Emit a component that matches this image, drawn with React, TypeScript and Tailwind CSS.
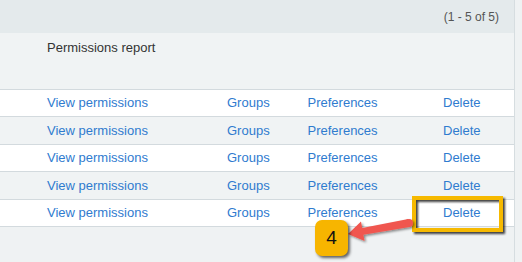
export default function App() {
  const rows = [0, 1, 2, 3, 4];

  return (
    <div className="relative w-[522px] h-[262px] overflow-hidden bg-[#eff2f3] font-['Liberation_Sans',Arial,sans-serif]">
      <div className="w-[515px] h-full border-r border-[#d6dde0]">
        {/* Pager */}
        <div className="h-[33px] bg-[#e4eaec] flex items-center justify-end pr-[15px] text-[12px] text-[#555]">
          (1 - 5 of 5)
        </div>

        {/* Report title */}
        <div className="h-[56px] bg-[#f0f3f4] pl-[47px] pt-[7px] text-[13px] leading-[16px] text-[#333]">
          Permissions report
        </div>

        {/* Rows */}
        <div className="border-b border-[#d3dade]">
          {rows.map((i) => (
            <div
              key={i}
              className={`h-[27.4px] border-t border-[#d3dade] flex items-center pl-[47px] text-[13px] text-[#2f7bcf] ${
                i % 2 === 1 ? 'bg-[#f0f3f4]' : 'bg-white'
              }`}
            >
              <span className="w-[180px]">View permissions</span>
              <span className="w-[80.5px]">Groups</span>
              <span className="w-[135.5px]">Preferences</span>
              <span>Delete</span>
            </div>
          ))}
        </div>
      </div>

      {/* Callout box around last Delete */}
      <div className="absolute left-[412px] top-[196px] w-[91px] h-[36px] border-[4px] border-[#f6b900] drop-shadow-[2px_2px_1px_rgba(0,0,0,0.75)]"></div>

      {/* Arrow */}
      <svg className="absolute inset-0 pointer-events-none" width="522" height="262" viewBox="0 0 522 262">
        <defs>
          <filter id="sh" x="-20%" y="-40%" width="140%" height="180%">
            <feDropShadow dx="1.5" dy="1.5" stdDeviation="1.2" floodColor="#000" floodOpacity="0.45" />
          </filter>
        </defs>
        <g filter="url(#sh)" fill="#f0574f">
          <polygon points="348,234 361,221.5 362.2,227.9 408.3,219.1 409.7,226.9 363.4,234.7 364.6,241.1" />
          <circle cx="409" cy="223" r="4" />
        </g>
      </svg>

      {/* Step badge */}
      <div className="absolute left-[315px] top-[220px] w-[33px] h-[36px] rounded-[7px] bg-[#f7b500] shadow-[2px_2px_3px_rgba(0,0,0,0.6)] flex items-center justify-center text-[19px] text-[#111]">
        4
      </div>
    </div>
  );
}
